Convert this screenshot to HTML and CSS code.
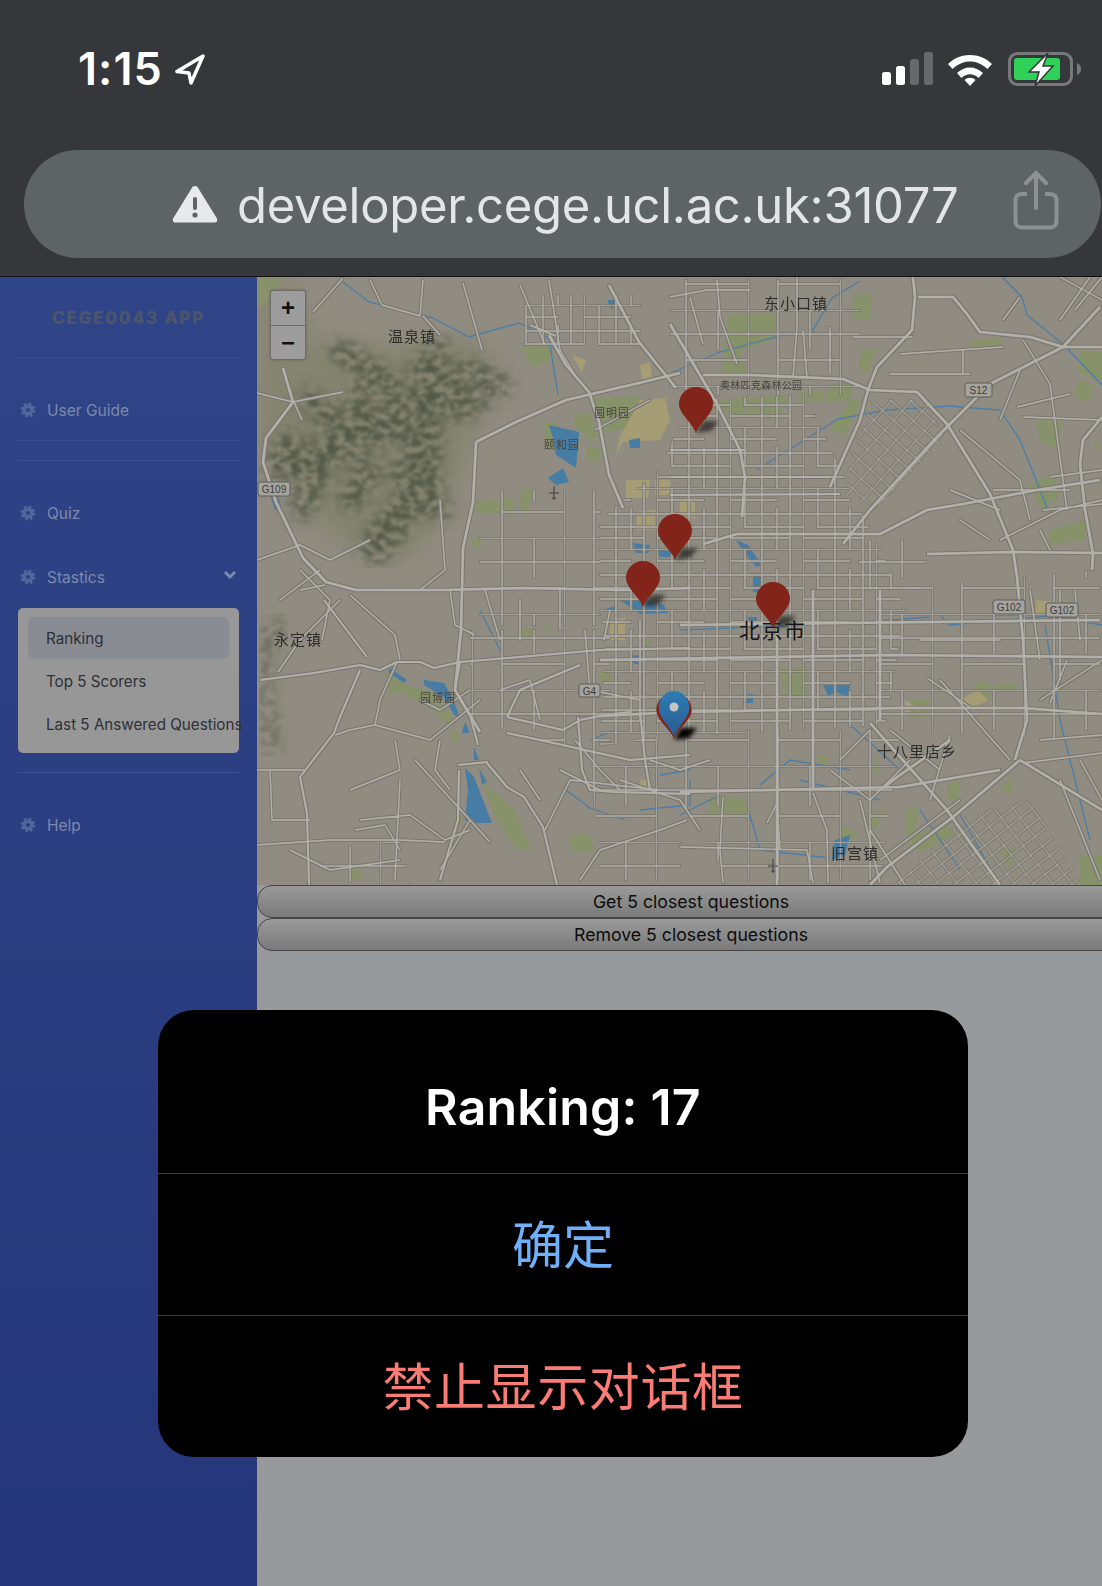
FILE: index.html
```html
<!DOCTYPE html>
<html lang="en">
<head>
	<meta charset="UTF-8">
	<title>CEGE0043 App</title>
	<link rel="stylesheet" href="styles.css">
</head>
<body>
<svg class="defs" width="0" height="0">
	<symbol id="gear" viewBox="0 0 16 16">
		<circle class="gear-teeth" cx="8" cy="8" r="6.2"/>
		<circle class="gear-ring" cx="8" cy="8" r="3.9"/>
	</symbol>
</svg>

<header class="phone-bar">
	<div class="status-row">
		<div class="clock">
			<span class="time">1:15</span>
			<svg class="arrow" viewBox="0 0 32 32"><path d="M29 3 3 18.500l12 1.500 2 10z"/></svg>
		</div>
		<div class="status-icons">
			<svg class="signal" viewBox="0 0 52 33">
				<rect class="on" x="0" y="20" width="9" height="13" rx="2.500"/>
				<rect class="on" x="14" y="14" width="9" height="19" rx="2.500"/>
				<rect class="off" x="28" y="7" width="9" height="26" rx="2.500"/>
				<rect class="off" x="42" y="0" width="9" height="33" rx="2.500"/>
			</svg>
			<svg class="wifi" viewBox="0 0 46 34">
				<path d="M1 12C13 0 33 0 45 12l-4.500 5C30 7 16 7 5.500 17z"/>
				<path d="M10 21c7.500-7.500 18.500-7.500 26 0l-4.500 5c-5-5-12-5-17 0z"/>
				<path d="M17.500 28c3-3 8-3 11 0L23 34z"/>
			</svg>
			<svg class="battery" viewBox="0 0 74 34">
				<rect class="battery-shell" x="1.500" y="1.500" width="62" height="31" rx="8"/>
				<rect class="battery-level" x="6" y="6" width="46" height="22" rx="3"/>
				<path class="battery-nub" d="M69 11c3 1 4 3.500 4 6s-1 5-4 6z"/>
				<path class="battery-bolt" d="M40 1 21 20h10l-4 14 18-20H35z"/>
			</svg>
		</div>
	</div>
	<div class="address-pill">
		<svg class="warn" viewBox="0 0 46 38">
			<path class="warn-tri" d="M23 1c1.500 0 2.500.8 3.300 2.200l18.500 30c1 2 .2 4.300-2.300 4.300h-39c-2.500 0-3.300-2.300-2.300-4.300l18.500-30C20.500 1.800 21.500 1 23 1z"/>
			<rect class="warn-mark" x="21" y="12" width="4" height="13" rx="2"/>
			<circle class="warn-mark" cx="23" cy="30" r="2.600"/>
		</svg>
		<span class="url">developer.cege.ucl.ac.uk:31077</span>
		<svg class="share" viewBox="0 0 46 60">
			<path class="share-box" d="M14 24H9c-4 0-6.500 2.500-6.500 6v21c0 4 2.500 6.500 6.500 6.500h28c4 0 6.500-2.500 6.500-6.500V30c0-3.500-2.500-6-6.500-6h-5"/>
			<path class="share-stem" d="M23 38V4M13 13l10-10 10 10"/>
		</svg>
	</div>
</header>

<main class="page">
	<aside class="sidebar">
		<div class="brand">CEGE0043 APP</div>
		<hr class="rule">
		<a class="nav-item first"><svg class="gear-icon"><use href="#gear"/></svg>User Guide</a>
		<hr class="rule near">
		<hr class="rule gap">
		<a class="nav-item first"><svg class="gear-icon"><use href="#gear"/></svg>Quiz</a>
		<a class="nav-item second">
			<svg class="gear-icon"><use href="#gear"/></svg>Stastics
			<svg class="chevron" viewBox="0 0 14 10"><path d="M2 2l5 5 5-5"/></svg>
		</a>
		<div class="sub-panel">
			<a class="sub-item active">Ranking</a>
			<a class="sub-item">Top 5 Scorers</a>
			<a class="sub-item">Last 5 Answered Questions</a>
		</div>
		<hr class="rule gap">
		<a class="nav-item first"><svg class="gear-icon"><use href="#gear"/></svg>Help</a>
	</aside>

	<section class="content">
		<div class="map">
			<svg class="map-art" viewBox="257 277 845 608">
				<defs>
					<pattern id="gridFine" width="73" height="61" patternUnits="userSpaceOnUse">
						<path class="grid-line" d="M0 0V61M15 0V40M32 0V61M47 20V61M60 0V61M0 0H73M0 12H47M0 26H73M15 39H73M0 50H60"/>
					</pattern>
					<pattern id="gridWide" width="92" height="76" patternUnits="userSpaceOnUse" patternTransform="translate(12 6)">
						<path class="grid-line" d="M0 0V76M30 0V76M62 0V40M0 0H92M0 24H92M30 50H92"/>
					</pattern>
					<pattern id="gridDiag" width="15" height="13" patternUnits="userSpaceOnUse" patternTransform="rotate(42)">
						<path class="grid-line" d="M0 0V13M0 0H15"/>
					</pattern>
					<pattern id="gridDiagB" width="15" height="12" patternUnits="userSpaceOnUse" patternTransform="rotate(-38)">
						<path class="grid-line" d="M0 0V12M0 0H15"/>
					</pattern>
					<filter id="terrain" x="-10%" y="-10%" width="120%" height="120%">
						<feGaussianBlur in="SourceGraphic" stdDeviation="8" result="soft"/>
						<feTurbulence type="fractalNoise" baseFrequency="0.11 0.15" numOctaves="4" seed="11"/>
						<feColorMatrix values="0 0 0 0 0  0 0 0 0 0  0 0 0 0 0  3 0 0 0 -0.950"/>
						<feComposite in="soft" operator="in"/>
						<feGaussianBlur stdDeviation=".9"/>
					</filter>
					<filter id="engrave" x="0" y="0" width="100%" height="100%">
						<feMorphology in="SourceAlpha" operator="dilate" radius=".6" result="fat"/>
						<feFlood flood-color="#7b776d"/>
						<feComposite in2="fat" operator="in" result="edge"/>
						<feMerge>
							<feMergeNode in="edge"/>
							<feMergeNode in="SourceGraphic"/>
						</feMerge>
						<feGaussianBlur stdDeviation=".5"/>
					</filter>
					<filter id="fuzz"><feGaussianBlur stdDeviation=".6"/></filter>
					<filter id="soft" x="-30%" y="-50%" width="160%" height="200%"><feGaussianBlur stdDeviation="2.200"/></filter>
					<filter id="softer"><feGaussianBlur stdDeviation="12"/></filter>
					<linearGradient id="blueHead" x1="0" y1="0" x2="0" y2="1">
						<stop offset="0" stop-color="#2c7cb4"/>
						<stop offset="1" stop-color="#2a5c90"/>
					</linearGradient>
					<path id="pinShape" d="M0 0C-4-11-17-19-17-29A17 17 0 0 1 17-29C17-19 4-11 0 0Z"/>
					<path id="pinShadow" d="M0 0 7-12H23L15-2Z"/>
				</defs>

				<rect class="ground" x="257" y="277" width="845" height="608"/>

				<!-- hills in the north west -->
				<path class="hill-tint" d="M257 277H290L320 350 490 340 480 420 450 500 410 560 330 540 280 470 257 440Z" filter="url(#softer)"/>
				<g class="terrain" filter="url(#terrain)">
					<path class="ridge" d="M300 465 345 445 400 420 445 385"/>
					<path class="ridge" d="M425 430 425 480 395 520 375 548"/>
					<path class="ridge" d="M395 420 425 440"/>
					<path class="ridge thin" d="M340 350 385 380 410 415M320 470 300 510M470 370 500 385M362 395 350 440M420 370 440 350M330 420 310 400M370 470 350 500M400 470 440 510M290 440 275 470M450 410 480 400"/>
				</g>
				<g class="terrain faint" filter="url(#terrain)">
					<path class="ridge thin" d="M262 645 262 700 272 745M285 625 262 640"/>
				</g>
				<path class="park" d="M257 277H282L275 296 262 305 257 310Z" filter="url(#fuzz)"/>

				<!-- parks and campuses -->
				<g filter="url(#fuzz)">
					<path class="park" d="M522 348 548 342 550 362 532 368ZM544 422 558 424 556 450 546 448ZM574 425 590 440 600 436 590 414 576 414ZM521 488 534 490 526 517 520 505ZM476 502 512 498 516 515 475 512ZM470 540 484 535 478 552ZM591 398 640 396 638 428 600 432ZM588 446 604 450 598 462 586 460Z"/>
					<path class="campus" d="M620 436 635 410 640 400 665 398 670 420 660 440 622 442 616 457ZM572 355 586 360 582 372ZM640 365 642 380 652 378 650 362ZM626 480 650 480 648 498 626 498ZM637 512 655 510 655 530 637 530ZM610 620 625 618 625 640 610 640ZM680 500 695 500 695 518 680 518Z"/>
					<path class="park" d="M728 315 778 313 772 340 740 350 748 378 722 372ZM853 295 872 294 870 320 852 318ZM800 392 825 392 820 402 800 402ZM712 400 790 395 778 420 710 410ZM830 385 855 382 850 400 825 402Z"/>
					<path class="park" d="M850 400 862 400 845 435 830 430ZM862 350 877 350 868 372 858 368ZM970 340 1002 338 1000 350 972 350ZM1080 350 1102 352 1102 382 1078 372ZM1080 380 1095 385 1088 402 1072 395ZM1036 420 1062 422 1056 450 1040 440ZM1095 440 1102 448 1095 450ZM1028 484 1055 475 1060 495 1042 510ZM1050 530 1085 520 1085 540 1050 545Z"/>
					<path class="park" d="M778 668 808 668 808 698 786 698ZM710 795 722 795 722 815 710 815ZM745 797 720 797 722 815 748 815ZM975 682 990 682 990 702 975 702ZM994 684 1016 684 1016 692 994 692ZM910 700 930 700 926 718 908 718ZM905 840 945 822 955 835 920 852ZM905 808 918 808 915 835 905 835ZM1080 855 1102 855 1102 885 1080 885ZM947 785 960 780 958 800 948 800ZM815 755 828 755 826 770ZM880 752 878 775 872 770ZM842 825 860 835 840 845ZM860 815 885 812 875 830ZM1000 790 1012 775 1012 795Z"/>
					<path class="park" d="M385 672 405 685 430 690 455 720 450 725 425 705 400 692 390 695ZM450 727 462 738 452 742ZM483 783 513 807 532 850 517 850 494 815ZM571 835 588 834 596 850 580 852 570 850ZM352 870 362 870 362 880 352 880ZM450 820 463 815 460 825ZM600 672 612 672 612 682 600 682ZM520 630 536 628 536 640 520 640ZM1000 850 1015 848 1010 870ZM640 640 650 640 650 650ZM540 625 550 625 552 635Z"/>
					<path class="campus" d="M960 700 978 690 988 700 965 712ZM640 780 650 780 650 790 640 790ZM1036 600 1060 602 1060 615 1036 615ZM905 700 915 706 905 718ZM655 480 670 480 670 495 655 495Z"/>
				</g>

				<!-- rivers and lakes -->
				<g filter="url(#fuzz)">
					<path class="water" d="M390 668 407 680 404 683 388 672ZM424 680 444 683 452 697 460 717 454 715 444 697 424 685ZM465 722 470 733 462 733ZM474 747 479 760 474 760ZM465 768 474 777 492 823 470 823 465 820 468 790ZM479 768 487 782 482 785ZM272 480 282 508 275 510 268 490ZM549 425 579 432 576 468 556 455 553 438ZM548 478 563 468 569 482 556 485ZM620 600 645 600 664 605 668 613 640 614ZM633 543 650 545 648 553 636 553ZM658 550 672 548 672 557 660 557ZM753 573 763 573 761 593 753 592ZM748 617 757 617 757 627 750 627ZM736 540 748 545 762 565 756 567 744 552ZM823 685 850 685 848 697 836 692 828 696ZM743 695 753 694 753 703 743 703ZM632 655 642 656 640 665 633 663ZM603 610 615 606 615 612ZM629 440 640 438 640 448 630 448ZM607 300 616 300 612 310ZM835 840 850 835 845 855 832 860Z"/>
				</g>
				<path class="river" d="M343 282 369 302 433 318 469 337 519 323 549 338 558 395M673 372 720 352 783 335 810 335 832 298 860 281M1002 277 1022 297 1027 315 1064 345 1102 385M757 470 838 419 887 410 950 406 1000 410 1020 440 1048 510M940 615 950 625 1050 616 1102 625M680 630 840 624 930 617M845 720 900 770M920 810 960 870M760 785 790 760 850 770M1045 625 1060 720 1090 840M880 800 800 780M680 815 720 795M747 805 760 850 830 858M566 790 590 808 625 820M660 775 690 770M640 810 690 805 690 780M960 815 1000 885M480 610 500 650M590 740 615 730"/>

				<g filter="url(#engrave)">
					<!-- street grids, clipped to the built up areas -->
					<path fill="url(#gridFine)" d="M690 400 805 395 855 500 890 570 905 610 885 725 700 735 600 745 606 640 600 610 600 520 660 470Z"/>
					<path fill="url(#gridWide)" d="M880 590 1100 570V740L880 730ZM680 730H900L880 880 730 880 680 800ZM470 630H610V760L470 720ZM590 745 680 735 680 880 600 880Z"/>
					<path fill="url(#gridWide)" d="M670 280H860V395H670ZM850 540H930L920 590 870 590ZM480 490H600V625H480Z"/>
					<path fill="url(#gridFine)" d="M525 295 640 295 640 345 525 345Z"/>
					<path fill="url(#gridDiag)" d="M872 400 925 400 945 440 880 505 845 500 850 460Z"/>
					<path fill="url(#gridDiagB)" d="M967 815 1030 800 1082 885H895Z"/>
					<path fill="url(#gridWide)" d="M320 850 400 840 410 885H320Z"/>

					<!-- minor roads -->
					<g class="road minor">
						<path d="M343 278 313 312M370 280 382 305 420 316 423 280M423 316 440 335M463 283 482 350M520 285 545 345M530 325 556 336M549 280 560 350 578 380"/>
						<path d="M257 393 293 402 343 392M294 402 302 420M300 570 330 600 322 640M257 560 300 545 330 560 370 540M340 600 300 640 278 672M280 600 320 570M420 590 445 570 440 500M420 700 440 710 470 690M397 662 380 700 375 725 350 730 335 735M375 725 430 740 480 700M440 740 435 770 450 790M415 760 470 820 490 842M360 820 410 815 445 840 470 830M257 770 290 770 305 770M270 770 272 820 310 820M257 845 330 840 400 840 445 842M400 780 395 880M290 850 330 870 400 860M350 790 400 770 395 740M355 830 385 825 400 850M450 590 455 625 475 635M485 590 500 640M300 590 325 585M350 595 395 635 400 660"/>
						<path d="M670 297 707 290 750 290M690 297 703 344M717 280 720 317 737 364M797 277 797 327 793 377M803 330 807 377M830 327 830 374M853 337 913 337M900 354 1003 347M890 374 970 374M963 350 963 374M1003 320 1020 297M1023 340 1050 384 1067 510M1017 407 1070 394M1023 417 1102 420M1050 477 1102 470M993 490 1070 490M1043 510 1102 504M1090 277 1060 320M1060 277 1102 300M1075 310 1102 277M960 430 1020 480 1030 520M950 490 1000 510M1000 540 1060 510 1102 500M1000 420 1020 370M1040 530 1050 550M960 520 990 540"/>
						<path d="M927 678 970 707M1023 763 1102 753M1063 787 1102 810M1067 660 1050 703M1030 590 1040 660M1060 590 1060 680M1102 660 1040 700M1075 590 1080 640M890 730 940 770M950 735 930 800M830 770 870 800 910 760M813 793 827 830 828 883M723 797 720 850 723 883M767 823 777 803 780 850M680 847 807 850 813 883M860 800 880 883M880 860 960 800M1080 760 1102 800M1060 780 1100 880M940 680 1010 760M920 640 1000 640M1040 740 1102 735M840 760 870 730M870 830 905 885"/>
						<path d="M500 690 530 680 540 720M585 630 590 690 640 700M575 740 600 770 620 790M650 760 680 770 710 760M620 780 680 800 700 830M545 830 570 780 660 790M560 770 600 790M520 770 540 800M580 880 600 850 660 830 687 820M440 870 470 820M610 610 604 640M640 620 640 720M595 430 650 400M560 590 560 630M520 600 520 640"/>
					</g>

					<!-- main roads -->
					<g class="road major">
						<path d="M283 368 293 402 266 438 263 462 276 502 303 558 326 582 356 590 443 590 523 588 623 590 690 588"/>
						<path d="M476 442 473 502 463 548 461 630 455 690 480 732"/>
						<path d="M476 442 516 422 566 400 639 383 680 373"/>
						<path d="M549 335 566 365 589 392 599 422 609 475 623 508M609 285 639 342 676 388"/>
						<path d="M670 324 697 370 717 404 740 450 745 477 742 517"/>
						<path d="M703 375 750 375 843 379 870 390 917 392 947 424 990 494 1013 550 1017 577 1023 640 1027 720 1015 760"/>
						<path d="M913 277 915 297 912 330 877 367 868 390 860 420 830 487"/>
						<path d="M1100 307 1063 347 990 384 937 437 870 510 843 544"/>
						<path d="M918 297 953 297 967 314 980 332 1030 337 1063 347 1102 347"/>
						<path d="M1102 417 1083 440 1080 464 1085 510 1093 554 1092 570"/>
						<path d="M703 544 737 534 880 534 927 510 963 504 1037 490 1100 480M927 554 1013 552 1102 553"/>
						<path d="M680 625 930 622 1100 620"/>
						<path d="M600 660 890 655 1102 657"/>
						<path d="M600 716 680 712 900 708 1023 708 1102 714"/>
						<path d="M680 792 900 787 1000 770M880 790 900 775 950 740"/>
						<path d="M1020 760 953 817 887 867 870 885"/>
						<path d="M870 723 947 810 1000 885"/>
						<path d="M1020 760 1102 810"/>
						<path d="M777 590V885M813 590V790M880 590V720"/>
					</g>
					<g class="road lesser">
						<path d="M360 670 340 717 334 733 300 777 307 813 309 885M324 600 367 657M260 680 314 673 360 665 380 670 397 662 420 662 434 668 460 662 600 650 690 648"/>
						<path d="M460 662 455 690 470 715 478 745M487 763 507 787 524 797 543 827 557 885M458 765 488 762M459 770 458 820 440 880"/>
						<path d="M507 717 520 690 580 665M507 717 563 730 580 720 600 716 630 712M507 733 540 740 630 760 690 755M578 717 582 770 590 790 615 792 690 794M640 712 645 760 650 790"/>
						<path d="M670 495 840 494M670 477 830 477M670 450 745 450"/>
					</g>
				</g>

				<!-- labels -->
				<g filter="url(#fuzz)" class="label-group">
					<text class="map-label" x="388" y="342">温泉镇</text>
					<text class="map-label" x="764" y="309">东小口镇</text>
					<text class="map-label" x="274" y="645">永定镇</text>
					<text class="map-label" x="877" y="757">十八里店乡</text>
					<text class="map-label" x="831" y="859">旧宫镇</text>
					<text class="map-label small" x="720" y="389">奥林匹克森林公园</text>
					<text class="map-label small wide" x="594" y="417">圆明园</text>
					<text class="map-label small wide" x="544" y="449">颐和园</text>
					<text class="map-label small wide" x="420" y="702">园博园</text>
				</g>
				<g class="shield"><rect x="258" y="482" width="32" height="14" rx="2"/><text x="274" y="493">G109</text></g>
				<g class="shield"><rect x="965" y="383" width="27" height="14" rx="2"/><text x="978.500" y="394">S12</text></g>
				<g class="shield"><rect x="993" y="600" width="32" height="14" rx="2"/><text x="1009" y="611">G102</text></g>
				<g class="shield"><rect x="1046" y="603" width="32" height="14" rx="2"/><text x="1062" y="614">G102</text></g>
				<g class="shield"><rect x="579" y="684" width="21" height="13" rx="2"/><text x="589.500" y="695">G4</text></g>
				<path class="plane" d="M773 873V859M768 866H778M771 871H775"/>
				<path class="plane" d="M554 500V486M549 493H559M552 498H556"/>

				<!-- markers -->
				<g transform="translate(696 433)"><use href="#pinShadow" class="pin-shadow" filter="url(#soft)"/><use href="#pinShape" class="pin-red"/></g>
				<g transform="translate(675 560)"><use href="#pinShadow" class="pin-shadow" filter="url(#soft)"/><use href="#pinShape" class="pin-red"/></g>
				<g transform="translate(643 607)"><use href="#pinShadow" class="pin-shadow" filter="url(#soft)"/><use href="#pinShape" class="pin-red"/></g>
				<text class="map-label city" x="739" y="638">北京市</text>
				<g transform="translate(773 628)"><use href="#pinShadow" class="pin-shadow" filter="url(#soft)"/><use href="#pinShape" class="pin-red"/></g>
				<g transform="translate(674 740)">
					<use href="#pinShadow" class="pin-shadow strong" filter="url(#soft)"/>
					<use href="#pinShape" class="pin-red" transform="translate(0 -1) scale(1.04 1)"/>
					<use href="#pinShape" class="pin-blue" transform="translate(0 -3) scale(.9 1)"/>
					<circle class="pin-dot" cx="0" cy="-33" r="4.500"/>
				</g>
			</svg>
			<div class="zoom-box">
				<button class="zoom-btn">+</button>
				<button class="zoom-btn">&minus;</button>
			</div>
		</div>
		<button class="wide-btn">Get 5 closest questions</button>
		<button class="wide-btn">Remove 5 closest questions</button>
	</section>
</main>

<div class="dialog">
	<div class="dialog-title">Ranking: 17</div>
	<div class="dialog-btn ok">确定</div>
	<div class="dialog-btn block">禁止显示对话框</div>
</div>
</body>
</html>
```

FILE: styles.css
```css
html, body {
    margin: 0;
    padding: 0;
}
body {
    position: relative;
    width: 1102px;
    height: 1586px;
    overflow: hidden;
    background-color: #98999b;
    font-family: Inter, "Noto Sans", sans-serif;
}
.defs {
    position: absolute;
}

/* phone status bar and address bar */
.phone-bar {
    height: 276px;
    background-color: #36373b;
    border-bottom: 1px solid #111;
    display: flex;
    flex-direction: column;
    overflow: hidden;
}
.status-row {
    height: 150px;
    flex: none;
    display: flex;
    justify-content: space-between;
    align-items: flex-start;
    padding: 0 20px 0 78px;
    box-sizing: border-box;
}
.clock {
    display: flex;
    align-items: center;
    gap: 11px;
    margin-top: 46px;
}
.time {
    color: #fff;
    font-size: 45px;
    font-weight: 600;
    line-height: 46px;
    letter-spacing: 1px;
}
.arrow {
    width: 32px;
    height: 32px;
}
.arrow path {
    fill: none;
    stroke: #fff;
    stroke-width: 3.5;
    stroke-linejoin: round;
}
.status-icons {
    display: flex;
    margin-top: 52px;
}
.signal {
    width: 52px;
    height: 33px;
    margin-right: 13px;
}
.signal .on { fill: #fff; }
.signal .off { fill: #66686c; }
.wifi {
    width: 46px;
    height: 34px;
    fill: #fff;
    margin-right: 15px;
}
.battery {
    width: 74px;
    height: 34px;
}
.battery-shell {
    fill: none;
    stroke: #77797c;
    stroke-width: 3;
}
.battery-level { fill: #30d158; }
.battery-nub { fill: #77797c; }
.battery-bolt {
    fill: #fff;
    stroke: #36373b;
    stroke-width: 1.5;
}
.address-pill {
    height: 108px;
    width: 1077px;
    flex: none;
    margin-left: 24px;
    border-radius: 54px;
    background-color: #5e6366;
    display: flex;
    align-items: center;
    padding-left: 148px;
    box-sizing: border-box;
}
.warn {
    width: 46px;
    height: 38px;
    margin-right: 20px;
}
.warn-tri { fill: #e8e9ec; }
.warn-mark { fill: #5e6366; }
.url {
    color: #e3e5e7;
    font-size: 49px;
    letter-spacing: -0.3px;
    line-height: 58px;
    white-space: nowrap;
    margin-top: 4px;
    margin-left: -1px;
}
.share {
    width: 46px;
    height: 60px;
    margin-left: 54px;
    margin-top: -8px;
    fill: none;
    stroke: #8d9194;
    stroke-width: 4;
}
.share-stem { stroke-linecap: round; }

/* sidebar */
.page {
    display: flex;
    height: 1309px;
}
.sidebar {
    width: 257px;
    flex: none;
    background: linear-gradient(#2f4587, #243679);
    box-sizing: border-box;
    padding: 0 18px;
    font-size: 15.5px;
}
.brand {
    height: 80px;
    padding-top: 31px;
    box-sizing: border-box;
    color: #4f5568;
    font-size: 17px;
    font-weight: 800;
    letter-spacing: 1.8px;
    text-align: center;
    line-height: 20px;
    white-space: nowrap;
}
.rule {
    border: 0;
    height: 1px;
    margin: 0;
    background-color: #3c5090;
}
.rule.near { margin-top: 10px; }
.rule.gap { margin-top: 19px; }
.nav-item {
    display: flex;
    align-items: center;
    height: 40px;
    padding-left: 2px;
    color: #7d89ad;
    position: relative;
}
.nav-item.first { margin-top: 32px; }
.nav-item.second { margin-top: 24px; }
.gear-icon {
    width: 16px;
    height: 16px;
    margin-right: 11px;
}
.gear-teeth {
    fill: none;
    stroke: #52669d;
    stroke-width: 2.6;
    stroke-dasharray: 2.43 2.44;
}
.gear-ring {
    fill: none;
    stroke: #52669d;
    stroke-width: 3.6;
}
.chevron {
    position: absolute;
    right: 2px;
    top: 13px;
    width: 14px;
    height: 10px;
    fill: none;
    stroke: #7d89ad;
    stroke-width: 3;
}
.sub-panel {
    height: 145px;
    margin-top: 11px;
    padding: 9px 10px;
    box-sizing: border-box;
    background-color: #979797;
    border-radius: 5px;
}
.sub-item {
    display: block;
    height: 42px;
    line-height: 44px;
    padding-left: 18px;
    margin-bottom: 1px;
    color: #2e3036;
    font-size: 15.2px;
    white-space: nowrap;
}
.sub-item.active {
    background-color: #8a8c93;
    border-radius: 6px;
}

/* map area */
.content {
    flex: 1;
    min-width: 0;
    overflow: hidden;
}
.map {
    height: 608px;
    position: relative;
}
.map-art {
    display: block;
    width: 845px;
    height: 608px;
}
.ground { fill: #918c81; }
.hill-tint { fill: #85846f; }
.terrain { opacity: .85; }
.terrain.faint { opacity: .45; }
.ridge {
    fill: none;
    stroke: #4a5140;
    stroke-width: 34;
    stroke-linecap: round;
}
.ridge.thin { stroke-width: 24; }
.park { fill: #87916a; }
.campus { fill: #a69d75; }
.water { fill: #467ba4; }
.river {
    fill: none;
    stroke: #4a7ea8;
    stroke-width: 1.3;
}
.grid-line {
    fill: none;
    stroke: #adaba5;
    stroke-width: 1.4;
}
.road {
    fill: none;
    stroke: #b2b0ab;
    stroke-linejoin: round;
}
.road.minor { stroke-width: 1.4; }
.road.lesser { stroke-width: 2; }
.road.major { stroke-width: 2.6; }
.map-label {
    fill: #2d2d2b;
    font-family: "Noto Sans CJK SC", sans-serif;
    font-size: 15px;
    letter-spacing: 1px;
}
.map-label.small {
    font-size: 10px;
    letter-spacing: .3px;
    fill: #45453f;
}
.map-label.wide {
    font-size: 11px;
    letter-spacing: 1px;
}
.map-label.city {
    font-size: 21px;
    letter-spacing: 1.5px;
    fill: #141414;
}
.shield rect {
    fill: #a5a39e;
    stroke: #5e5c57;
    stroke-width: 1;
}
.shield text {
    fill: #3c3c3a;
    font-family: "Liberation Sans", sans-serif;
    font-size: 10px;
    text-anchor: middle;
}
.plane {
    fill: none;
    stroke: #3c3c3a;
    stroke-width: 1;
}
.pin-red { fill: #83241a; }
.pin-blue { fill: url(#blueHead); }
.pin-dot { fill: #c4c4c4; }
.pin-shadow {
    fill: #2a2a28;
    opacity: .8;
}
.pin-shadow.strong {
    fill: #000;
    opacity: 1;
}
.zoom-box {
    position: absolute;
    left: 13px;
    top: 13px;
    width: 34px;
    border: 1px solid #6e6c66;
    border-radius: 3px;
    background-color: #9d9d9d;
    box-shadow: 0 0 2px #5f5e58;
}
.zoom-btn {
    display: block;
    width: 100%;
    height: 34px;
    padding: 0;
    border: 0;
    background: none;
    color: #111;
    font-family: "Liberation Sans", sans-serif;
    font-size: 24px;
    font-weight: bold;
    line-height: 30px;
}
.zoom-btn + .zoom-btn { border-top: 1px solid #6e6c66; }
.wide-btn {
    display: block;
    width: 868px;
    height: 33px;
    padding: 0;
    border: 1px solid #444;
    border-radius: 15px;
    background: linear-gradient(#9a9a9a, #7a7a7a);
    color: #0d0d0d;
    font-family: Inter, sans-serif;
    font-size: 17.7px;
    line-height: 30px;
    text-align: center;
}

/* alert dialog */
.dialog {
    position: absolute;
    left: 158px;
    top: 1010px;
    width: 810px;
    height: 447px;
    background-color: #000;
    border-radius: 36px;
    text-align: center;
    display: flex;
    flex-direction: column;
}
.dialog-title {
    height: 163px;
    color: #fff;
    font-size: 50px;
    font-weight: 600;
    line-height: 194px;
    letter-spacing: 0.2px;
}
.dialog-btn {
    flex: 1;
    border-top: 1px solid #3a3a3c;
    font-family: "Noto Sans CJK SC", sans-serif;
    font-size: 51px;
    line-height: 136px;
}
.dialog-btn.ok { color: #70aff9; }
.dialog-btn.block {
    color: #fb7c74;
    letter-spacing: 0.6px;
}
```
